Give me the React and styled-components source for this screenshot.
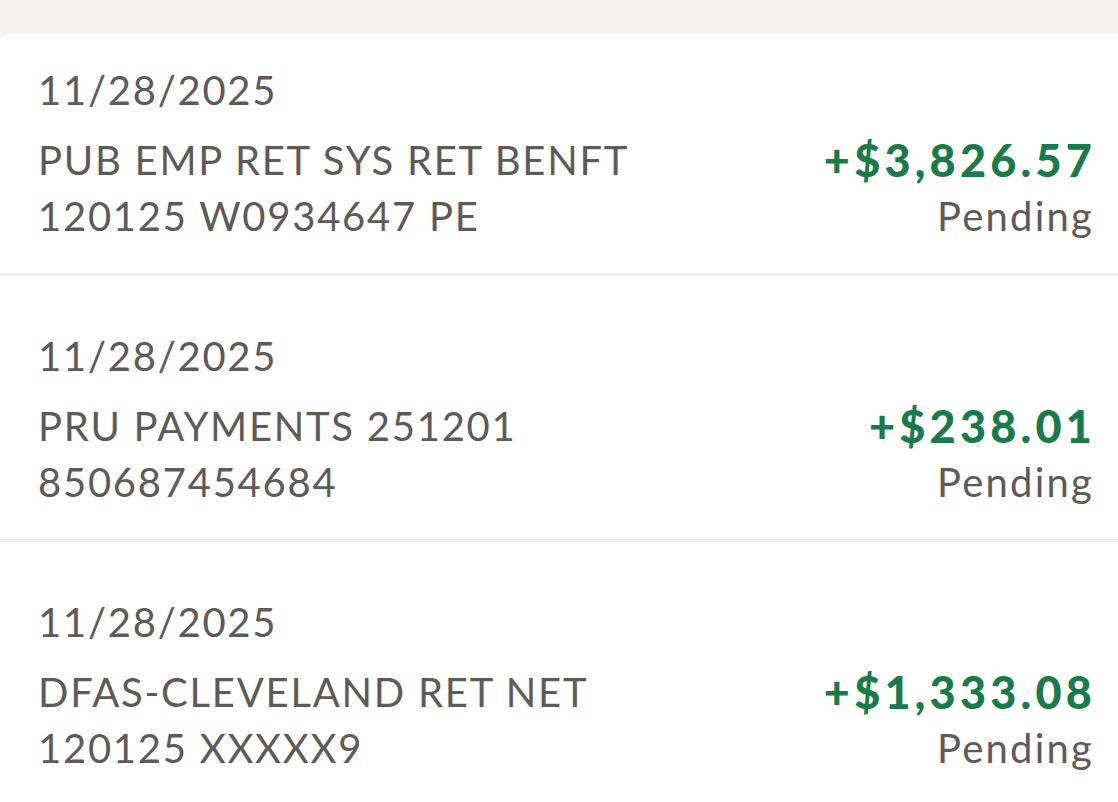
import React from 'react';
import styled, { createGlobalStyle } from 'styled-components';

const GlobalStyle = createGlobalStyle`
  html, body {
    margin: 0;
    padding: 0;
    background: #f5f4f2;
    font-family: Lato, "Noto Sans", sans-serif;
  }
`;

const Page = styled.div`
  display: flex;
  flex-direction: column;
  padding-top: 34px;
  min-height: 802px;
  box-sizing: border-box;
`;

const Card = styled.div`
  flex: 1;
  background: #ffffff;
  border-top-left-radius: 8px;
`;

const Row = styled.div`
  display: flex;
  justify-content: space-between;
  align-items: flex-end;
  padding: ${(p) => (p.$first ? '34px' : '58px')} 26px 29px 38px;
  border-bottom: ${(p) => (p.$last ? 'none' : '3px solid #efeeec')};
  color: #5f5a58;
  font-size: 40px;
  letter-spacing: 1.75px;
`;

const Left = styled.div`
  display: flex;
  flex-direction: column;
`;

const DateText = styled.div`
  line-height: 44px;
  margin-bottom: 20px;
`;

const Line = styled.div`
  line-height: 56px;
`;

const Right = styled.div`
  display: flex;
  flex-direction: column;
  align-items: flex-end;
`;

const Amount = styled.div`
  color: #1a7a49;
  font-weight: 900;
  font-size: 45px;
  letter-spacing: 4.2px;
  margin-right: -4px;
  line-height: 56px;
`;

const Status = styled(Line)`
  letter-spacing: 2.2px;
  margin-right: -2px;
`;

const txns = [
  { date: '11/28/2025', desc: 'PUB EMP RET SYS RET BENFT', ref: '120125 W0934647 PE', amount: '+$3,826.57' },
  { date: '11/28/2025', desc: 'PRU PAYMENTS 251201', ref: '850687454684', amount: '+$238.01' },
  { date: '11/28/2025', desc: 'DFAS-CLEVELAND RET NET', ref: '120125 XXXXX9', amount: '+$1,333.08' },
];

export default function App() {
  return (
    <Page>
      <GlobalStyle />
      <Card>
        {txns.map((t, i) => (
          <Row key={i} $first={i === 0} $last={i === txns.length - 1}>
            <Left>
              <DateText>{t.date}</DateText>
              <Line>{t.desc}</Line>
              <Line>{t.ref}</Line>
            </Left>
            <Right>
              <Amount>{t.amount}</Amount>
              <Status>Pending</Status>
            </Right>
          </Row>
        ))}
      </Card>
    </Page>
  );
}
